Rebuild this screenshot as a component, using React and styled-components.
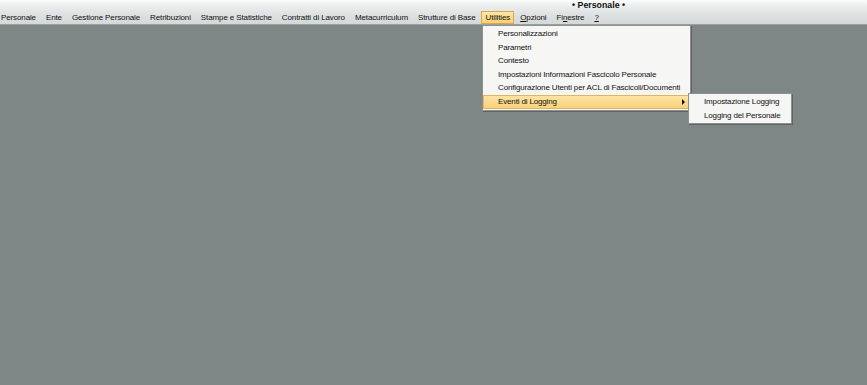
import React from "react";
import styled, { createGlobalStyle } from "styled-components";

const Global = createGlobalStyle`
  html, body { margin: 0; padding: 0; background: #7f8786; }
  body { font-family: "Liberation Sans", Tahoma, sans-serif; font-size: 8px; letter-spacing: -0.15px; color: #111; }
  #root { width: 867px; height: 385px; }
`;

const Page = styled.div`
  position: relative;
  width: 867px;
  height: 385px;
  background: #7f8786;
  overflow: hidden;
`;

const Header = styled.div`
  display: flex;
  flex-direction: column;
  height: 25px;
  background: linear-gradient(#fbfcfc 0%, #eef0f0 20%, #dfe3e3 55%, #d4d8d8 100%);
  border-bottom: 1px solid #9aa0a0;
  box-sizing: border-box;
`;

const TitleBar = styled.div`
  height: 11px;
  display: flex;
  align-items: center;
  padding-left: 572px;
  font-weight: bold;
  font-size: 8.8px;
  letter-spacing: 0;
  line-height: 11px;
`;

const MenuBar = styled.div`
  display: flex;
  align-items: center;
  height: 14px;
  gap: 2px;
  margin-left: -3px;
  letter-spacing: -0.12px;
`;

const MenuItem = styled.div`
  padding: 0 3px;
  height: 13px;
  box-sizing: border-box;
  border: 1px solid ${(p) => (p.$active ? "#d9a84a" : "transparent")};
  background: ${(p) => (p.$active ? "linear-gradient(#fde6a8, #f8cf76)" : "transparent")};
  white-space: nowrap;
  line-height: 11px;
`;

const U = styled.span`
  text-decoration: underline;
`;

const Dropdown = styled.div`
  position: absolute;
  left: ${(p) => p.$left}px;
  top: ${(p) => p.$top}px;
  width: ${(p) => p.$width}px;
  background: #f6f6f4;
  border: 1px solid #8c9090;
  box-shadow: 1px 1px 0 #5e6464;
  padding: 1px 0;
  box-sizing: border-box;
  display: flex;
  flex-direction: column;
`;

const DropItem = styled.div`
  position: relative;
  height: 13.6px;
  padding-left: ${(p) => p.$indent}px;
  white-space: nowrap;
  box-sizing: border-box;
  border: 1px solid ${(p) => (p.$active ? "#e0b55c" : "transparent")};
  background: ${(p) => (p.$active ? "linear-gradient(#fde3a2, #f9d17c)" : "transparent")};
  line-height: 11.6px;
`;

const Arrow = styled.span`
  position: absolute;
  right: 4px;
  top: 3px;
  width: 0;
  height: 0;
  border-top: 3px solid transparent;
  border-bottom: 3px solid transparent;
  border-left: 3px solid #111;
`;

const menus = [
  "Personale",
  "Ente",
  "Gestione Personale",
  "Retribuzioni",
  "Stampe e Statistiche",
  "Contratti di Lavoro",
  "Metacurriculum",
  "Strutture di Base",
];

const utilItems = [
  "Personalizzazioni",
  "Parametri",
  "Contesto",
  "Impostazioni Informazioni Fascicolo Personale",
  "Configurazione Utenti per ACL di Fascicoli/Documenti",
];

export default function App() {
  return (
    <Page>
      <Global />
      <Header>
        <TitleBar>• Personale •</TitleBar>
        <MenuBar>
          {menus.map((m) => (
            <MenuItem key={m}>{m}</MenuItem>
          ))}
          <MenuItem $active>Utilities</MenuItem>
          <MenuItem>
            <U>O</U>pzioni
          </MenuItem>
          <MenuItem>
            Fi<U>n</U>estre
          </MenuItem>
          <MenuItem>
            <U>?</U>
          </MenuItem>
        </MenuBar>
      </Header>
      <Dropdown $left={482} $top={25} $width={209}>
        {utilItems.map((t) => (
          <DropItem key={t} $indent={14}>
            {t}
          </DropItem>
        ))}
        <DropItem $indent={14} $active>
          Eventi di Logging
          <Arrow />
        </DropItem>
      </Dropdown>
      <Dropdown $left={688} $top={93} $width={104}>
        <DropItem $indent={14}>Impostazione Logging</DropItem>
        <DropItem $indent={14}>Logging del Personale</DropItem>
      </Dropdown>
    </Page>
  );
}
